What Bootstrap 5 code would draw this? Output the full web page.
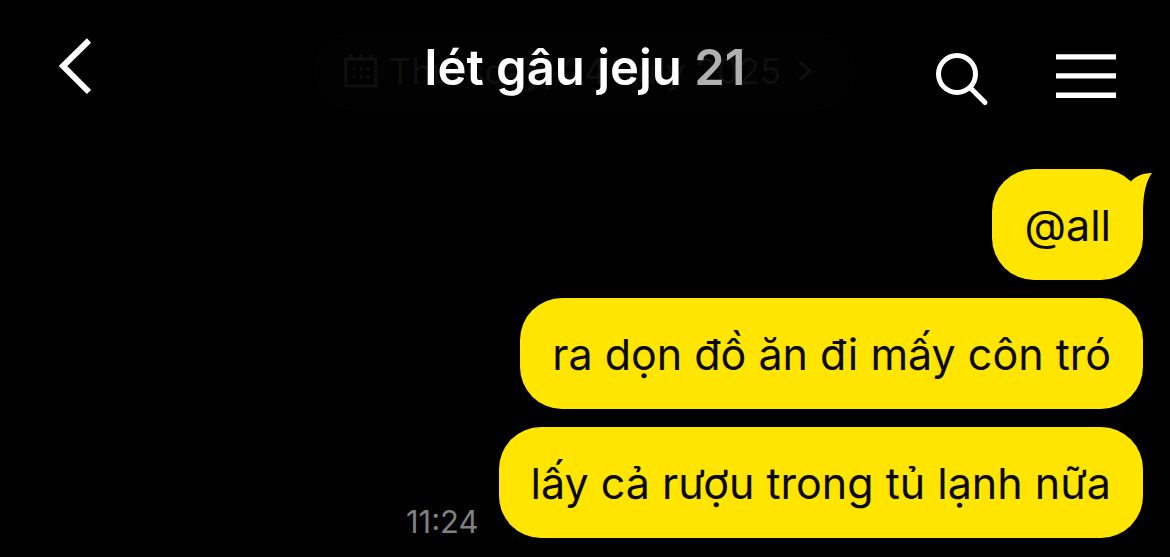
<!DOCTYPE html>
<html lang="vi">
<head>
<meta charset="utf-8">
<meta name="viewport" content="width=device-width, initial-scale=1">
<title>lét gâu jeju</title>
<link href="https://cdn.jsdelivr.net/npm/bootstrap@5.3.0/dist/css/bootstrap.min.css" rel="stylesheet">
<style>
  body { background: #000; color: #fff; font-family: Inter, "Liberation Sans", sans-serif; }
  .chat-header { height: 151px; padding: 30px 54px 0 56px; }
  .icon-btn { border: 0; background: none; color: #fff; padding: 0; line-height: 0; }
  .icon-btn svg { display: block; }
  .chat-title { font-size: 49px; font-weight: 600; line-height: 75px; }
  .member-count { color: #b0b0b0; }
  .header-actions { padding-top: 20px; }
  .date-pill { top: 32px; height: 79px; padding: 0 36px 0 30px; border-radius: 40px; background: #020202; color: #0f0f0f; font-size: 35px; gap: 10px; }
  .chat-log { padding: 18px 27px 19px; gap: 18px; }
  .bubble { background: #ffe500; color: #0c0a00; font-size: 43px; line-height: 63px; padding: 25px 32px 23px; border-radius: 42px; }
  .bubble-tail { top: 3px; right: -10px; }
  .sent-time { color: #808080; font-size: 31px; line-height: 32px; margin-right: 20px; }
</style>
</head>
<body>
<header class="chat-header position-relative d-flex justify-content-between align-items-start">
  <button class="date-pill position-absolute start-50 translate-middle-x border-0 d-flex align-items-center text-nowrap" type="button">
    <svg width="36" height="40" viewBox="0 0 36 40" fill="none" stroke="currentColor" stroke-width="3" aria-hidden="true">
      <path d="M3 7h30v27H3zM8 2v5M18 2v5M28 2v5"/>
      <path d="M10 17h3M17 17h3M24 17h3M10 25h3M17 25h3M24 25h3"/>
    </svg>
    <span>Thursday, 24 July 2025</span>
    <svg width="30" height="26" viewBox="0 0 30 26" fill="none" stroke="currentColor" stroke-width="3" aria-hidden="true"><path d="M9 3l10 9L9 21"/></svg>
  </button>
  <button class="icon-btn" type="button" aria-label="Back">
    <svg width="40" height="72" viewBox="0 0 40 72" fill="none" stroke="currentColor" stroke-width="6"><path d="M33 10.500L7 36l26 26"/></svg>
  </button>
  <h1 class="chat-title position-absolute start-50 translate-middle-x mb-0 text-nowrap">lét gâu jeju <span class="member-count">21</span></h1>
  <div class="header-actions d-flex align-items-start">
    <button class="icon-btn me-5" type="button" aria-label="Search">
      <svg width="76" height="60" viewBox="0 0 76 60" fill="none" stroke="currentColor" stroke-width="5" stroke-linecap="round"><circle cx="25" cy="24" r="18.500"/><path d="M38.500 38L53 52.500"/></svg>
    </button>
    <button class="icon-btn" type="button" aria-label="Menu">
      <svg width="60" height="50" viewBox="0 0 60 50" fill="currentColor"><path d="M0 4.300h60v5.300H0zM0 23.300h60v5.300H0zM0 42.500h60v5.500H0z"/></svg>
    </button>
  </div>
</header>
<main class="chat-log d-flex flex-column align-items-end">
  <div class="bubble position-relative">@all
    <svg class="bubble-tail position-absolute" width="26" height="40" viewBox="0 0 26 40" fill="#ffe500" aria-hidden="true"><path d="M0 14Q9 1 25 1Q16 13 16 40H0Z"/></svg>
  </div>
  <div class="bubble">ra dọn đồ ăn đi mấy côn tró</div>
  <div class="d-flex align-items-end">
    <time class="sent-time">11:24</time>
    <div class="bubble">lấy cả rượu trong tủ lạnh nữa</div>
  </div>
</main>
<script src="https://cdn.jsdelivr.net/npm/bootstrap@5.3.0/dist/js/bootstrap.bundle.min.js"></script>
</body>
</html>
